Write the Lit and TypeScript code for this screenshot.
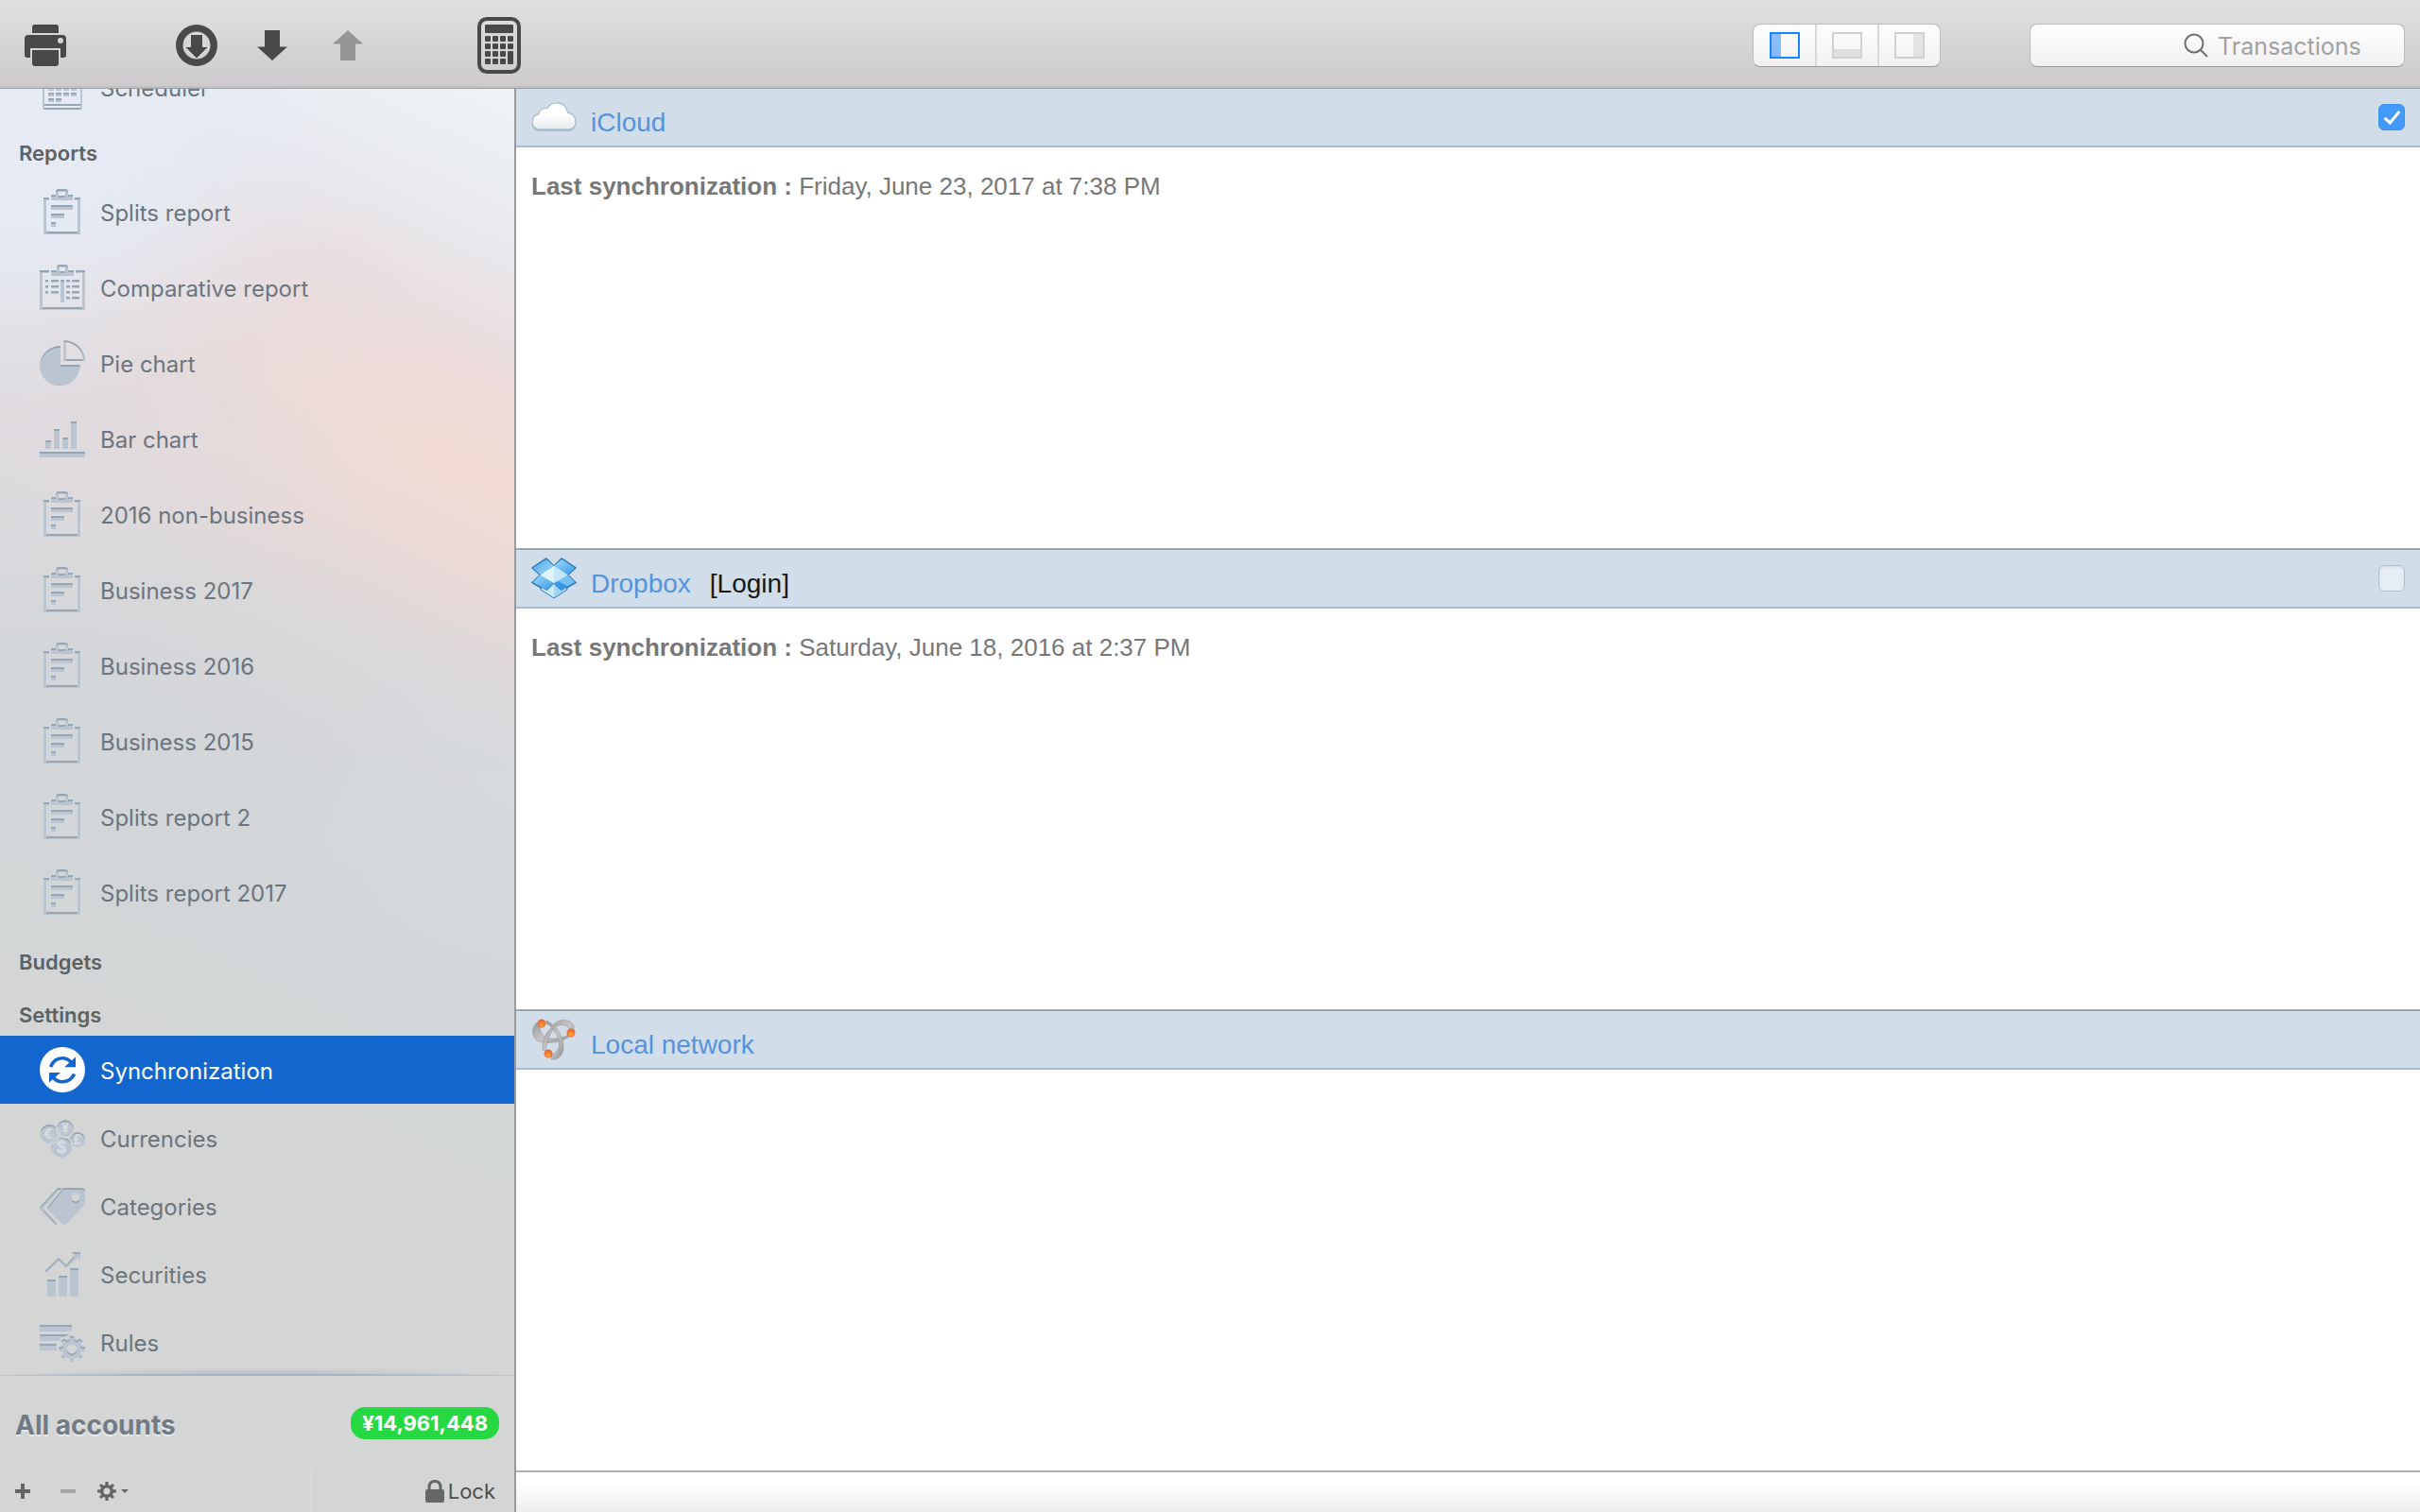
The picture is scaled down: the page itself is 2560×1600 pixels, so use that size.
import { LitElement, html, css, svg, nothing, type SVGTemplateResult } from "lit";
import { customElement, state } from "lit/decorators.js";
import { classMap } from "lit/directives/class-map.js";

type Item = { label: string; icon: string };
type Group = { title: string; size: "tall" | "regular"; items: Item[] };
type Source = { id: string; name: string; icon: string; login?: boolean; last?: string; enabled?: boolean };

const gearPath = (cx: number, cy: number, outer: number, inner: number, teeth: number): string => {
  const step = (Math.PI * 2) / teeth;
  const points: string[] = [];
  for (let i = 0; i < teeth; i++) {
    const a = i * step - Math.PI / 2;
    for (const [offset, r] of [[-0.3, inner], [-0.2, outer], [0.2, outer], [0.3, inner]]) {
      points.push(`${(cx + Math.cos(a + offset * step) * r).toFixed(2)} ${(cy + Math.sin(a + offset * step) * r).toFixed(2)}`);
    }
  }
  return `M${points.join("L")}Z`;
};

const ring = (cx: number, cy: number, r: number): string =>
  `M${cx - r} ${cy}a${r} ${r} 0 1 0 ${2 * r} 0a${r} ${r} 0 1 0 ${-2 * r} 0Z`;

const calendarCells = [18, 24, 30, 36].flatMap((y, row) =>
  [9, 17, 25, 33].slice(0, row === 3 ? 2 : 4).map((x) => svg`<rect x=${x} y=${y} width="6" height="4"></rect>`));

const glyphs: Record<string, SVGTemplateResult> = {
  calendar: svg`<g filter="url(#inset)"><path fill-rule="evenodd" d="M3 6H45V46Q45 48 43 48H5Q3 48 3 46ZM5 8V42H43V8ZM5 44V46H43V44Z"></path>${calendarCells}</g>`,
  clipboard: svg`<g filter="url(#inset)">
    <path d="M4 9H10V12H7V45H40V12H37V9H43V48H4Z"></path>
    <path fill-rule="evenodd" d="M12 6H17V3Q17 0 20 0H27Q30 0 30 3V6H35V12H12ZM20 3V7H27V3Z"></path>
    <path d="M12 17H35V22H12ZM12 26H26V31H12ZM12 35H17V40H12Z"></path></g>`,
  compare: svg`<g filter="url(#inset)">
    <path d="M0 6H10V9H3V45H45V9H38V6H48V48H0Z"></path>
    <path fill-rule="evenodd" d="M12 6H18V3Q18 0 21 0H27Q30 0 30 3V6H36V12H12ZM21 3V7H27V3Z"></path>
    <path d="M22 16H26V40H22ZM6 16H9V19H6ZM6 22H9V25H6ZM6 28H9V31H6ZM12 16H20V19H12ZM12 22H20V25H12ZM12 28H20V31H12ZM28 16H32V19H28ZM28 22H32V25H28ZM28 28H32V31H28ZM28 34H32V37H28ZM34 16H42V19H34ZM34 22H42V25H34ZM34 28H42V31H34ZM34 34H42V37H34Z"></path></g>`,
  pie: svg`<g filter="url(#inset)">
    <path d="M22 6V26H42.500A21.200 21.200 0 1 1 22 6Z"></path>
    <path fill-rule="evenodd" d="M25.500 0A22.500 22.500 0 0 1 48 22H25.500ZM27.500 2.200V20H45.700A20 20 0 0 0 27.500 2.200Z"></path></g>`,
  bars: svg`<g filter="url(#inset)"><path d="M6 26H12V35H6ZM15 14H21V35H15ZM24 23H30V35H24ZM33 6H39V35H33ZM0 38H48V44H0Z"></path></g>`,
  sync: svg`<circle cx="24" cy="24" r="24" fill="#fff"></circle>
    <path d="M11.500 21C14 15 18.500 11.800 24 11.800C28 11.800 31 13.500 33.500 16.500M36.500 28.500C34 34 29.500 36.800 24 36.800C20 36.800 17 35.300 14.500 32.500" fill="none" stroke="#1266cd" stroke-width="3.600"></path>
    <path d="M38 10.500V21.200H26ZM10 37.500V27H22Z" fill="#1266cd"></path>`,
  coins: svg`<g filter="url(#inset)">
    <circle cx="40" cy="26" r="8"></circle><circle cx="10.500" cy="20" r="10.300"></circle>
    <circle cx="27" cy="14" r="9"></circle><circle cx="23" cy="34" r="11"></circle></g>
    <g fill="none" stroke="#d4d6d5" stroke-width="1.200"><circle cx="10.500" cy="20" r="10.800"></circle><circle cx="27" cy="14" r="9.600"></circle><circle cx="23" cy="34" r="11.600"></circle></g>
    <g class="coin-signs"><text x="9" y="25">€</text><text x="27" y="19">¥</text><text x="40" y="31">£</text><text x="23" y="40" class="coin-large">$</text></g>`,
  tag: svg`<g filter="url(#inset)">
    <path fill-rule="evenodd" d="M26 5H44Q48 5 48 9V22L29 42.500Q26 45 23 42.500L9 28.500Q7.500 26.500 9 24.500L24 6Q25 5 26 5ZM${ring(38, 15, 4.5).slice(1)}"></path>
    <path d="M20 5H23.500L5 25Q4 26.500 5 28.500L18.500 43.500H16L1 29Q-.5 26.500 1 24.500L18 6Q19 5 20 5Z"></path></g>`,
  growth: svg`<g filter="url(#inset)"><path d="M8 30H17V48H8ZM20 26H29V48H20ZM32 18H41V48H32Z"></path>
    <path d="M34 1H43V10L40 7L28 18L20 10.500L7 23L6 20.500L20 7L28 14.500L37 4.500Z"></path></g>`,
  rules: svg`<g filter="url(#inset)"><path d="M0 6H34V13H0ZM0 16H31L27 18.500L23 19L20.500 23H0ZM0 26H18L17 30L18 33H0Z"></path>
    <path fill-rule="evenodd" d="${gearPath(34, 31.5, 14, 10.5, 8)}${ring(34, 31.5, 5)}"></path></g>`,
};

const sourceArt: Record<string, SVGTemplateResult> = {
  cloud: svg`<defs><linearGradient id="cloud-fill" x1="0" y1="0" x2="0" y2="1"><stop offset=".4" stop-color="#fff"></stop><stop offset="1" stop-color="#e6eaeb"></stop></linearGradient></defs>
    <path d="M8 39Q1 38 1 31Q1 24 8 22Q9 15 17 16Q21 9 29 10Q37 11 38 20Q47 22 47 31Q47 38 40 39Z" fill="#9db2c2" opacity=".7"></path>
    <path d="M8 37Q1 36 1 29Q1 22 8 20.500Q9 14 17 14.500Q21 8 29 9Q37 10 38.500 19Q47 21 47 29Q47 36 40 37Z" fill="url(#cloud-fill)" stroke="#a9bfcc" stroke-width="1.300"></path>`,
  dropbox: svg`<defs><linearGradient id="box-a" x1="0" y1="0" x2="1" y2="1"><stop offset="0" stop-color="#4ba6e8"></stop><stop offset="1" stop-color="#a8dcfa"></stop></linearGradient>
    <linearGradient id="box-b" x1="0" y1="0" x2="1" y2="1"><stop offset="0" stop-color="#a4d9f8"></stop><stop offset="1" stop-color="#3a9bea"></stop></linearGradient></defs>
    <g transform="translate(1 3)" stroke-linejoin="round">
      <path d="M9 20L23 26L37 20V33L23 42L9 33Z" fill="#b5dff8" stroke="#2d7cba"></path>
      <path d="M15 0L0 10L8.500 17.500L0 25.500L15 34L23 27L31 34L46 25.500L37.500 17.500L46 10L31 0L23 8Z" fill="#5fb4ee" stroke="#2d7cba" stroke-width="1.600"></path>
      <path d="M15 1L1 10L8.500 17L23 8Z" fill="url(#box-a)"></path><path d="M31 1L45 10L37.500 17L23 8Z" fill="url(#box-b)"></path>
      <path d="M8.500 17.500L1 25L15 33L23 26Z" fill="url(#box-b)"></path><path d="M37.500 17.500L45 25L31 33L23 26Z" fill="#3998e6"></path>
      <path d="M37.500 17.500L45 25L37 29L27 24Z" fill="#75c0f2"></path>
      <path d="M23 8L37.500 17.500L23 26L8.500 17.500Z" fill="#e3f3fd"></path><path d="M23 8L37.500 17.500L23 26Z" fill="#c4e6fa"></path>
      <path d="M23 27L30.500 34L36 31V32.500L23 41Z" fill="#9fd4f6"></path><path d="M23 27L15.500 34L10 31V32.500L23 41Z" fill="#cfeafb"></path>
    </g>`,
  network: svg`<defs><linearGradient id="steel" x1="0" y1="0" x2="1" y2="1"><stop offset="0" stop-color="#979797"></stop><stop offset=".5" stop-color="#c6c6c6"></stop><stop offset="1" stop-color="#949494"></stop></linearGradient>
    <radialGradient id="ember" cx=".5" cy=".7" r=".6"><stop offset="0" stop-color="#ffa63b"></stop><stop offset="1" stop-color="#f0622a"></stop></radialGradient></defs>
    <g transform="translate(1 3)" fill="url(#steel)" stroke="#8e8e8e" stroke-width=".5">
      <path d="M5 3C-1 8-1 17 5 22C13 26 28 25 38 19L40 15C30 21 18 22 12 17C8 13 8 9 9 7Z"></path>
      <path d="M20 9C23 2 31-1 38 1C43 3 45 7 44 12L39 10C37 5 30 4 25 8C18 14 16 22 14 33L11 32C11 22 14 14 20 9Z"></path>
      <path d="M15 1C25 6 33 16 33 29C33 38 27 43 20 42L20 37C27 35 30 29 28 22C26 14 21 7 15 4Z"></path>
    </g>
    <g fill="url(#ember)" stroke="#d56a3a" stroke-width=".5"><circle cx="11" cy="7" r="4.200"></circle><circle cx="42" cy="17" r="4.200"></circle><circle cx="18" cy="39" r="4.200"></circle></g>`,
};

const calculatorKeys = [20, 28, 36, 44].flatMap((y, row) =>
  [8, 16, 24, 32].map((x, col) =>
    col === 3 && row === 3 ? nothing : svg`<rect x=${x} y=${y} width="6" height=${col === 3 && row === 2 ? 14 : 6} rx="1"></rect>`));

@customElement("app-root")
export class AppRoot extends LitElement {
  @state() private selected = "Synchronization";

  private groups: Group[] = [
    { title: "", size: "regular", items: [{ label: "Scheduler", icon: "calendar" }] },
    {
      title: "Reports", size: "tall", items: [
        { label: "Splits report", icon: "clipboard" },
        { label: "Comparative report", icon: "compare" },
        { label: "Pie chart", icon: "pie" },
        { label: "Bar chart", icon: "bars" },
        { label: "2016 non-business", icon: "clipboard" },
        { label: "Business 2017", icon: "clipboard" },
        { label: "Business 2016", icon: "clipboard" },
        { label: "Business 2015", icon: "clipboard" },
        { label: "Splits report 2", icon: "clipboard" },
        { label: "Splits report 2017", icon: "clipboard" },
      ],
    },
    { title: "Budgets", size: "regular", items: [] },
    {
      title: "Settings", size: "regular", items: [
        { label: "Synchronization", icon: "sync" },
        { label: "Currencies", icon: "coins" },
        { label: "Categories", icon: "tag" },
        { label: "Securities", icon: "growth" },
        { label: "Rules", icon: "rules" },
      ],
    },
  ];

  private sources: Source[] = [
    { id: "icloud", name: "iCloud", icon: "cloud", last: "Friday, June 23, 2017 at 7:38 PM", enabled: true },
    { id: "dropbox", name: "Dropbox", icon: "dropbox", login: true, last: "Saturday, June 18, 2016 at 2:37 PM", enabled: false },
    { id: "local", name: "Local network", icon: "network" },
  ];

  static styles = css`
    :host {
      display: grid;
      grid-template-columns: 546px minmax(0, 1fr);
      grid-template-rows: 94px minmax(0, 1fr);
      height: 100vh;
      background: #fff;
      font-family: Inter, "Liberation Sans", sans-serif;
      font-size: 24px;
      line-height: 32px;
      color: #6c757d;
    }
    *, *::before, *::after { box-sizing: border-box; }
    svg { display: block; flex: none; }
    button { border: 0; padding: 0; margin: 0; background: none; font: inherit; color: inherit; }
    a { color: inherit; text-decoration: none; }
    h2, p, ul { margin: 0; padding: 0; }
    .defs { position: absolute; }

    .toolbar {
      grid-column: 1 / -1;
      display: flex;
      align-items: center;
      padding: 3px 16px 0 26px;
      background: linear-gradient(#e2dfe3, #cdcacd);
      border-bottom: 1px solid #a29fa2;
      box-shadow: inset 0 -2px #c3c0c3;
      color: #4a484a;
    }
    .toolbar svg { fill: currentColor; }
    .sync-tools { display: flex; align-items: center; gap: 42px; margin: 0 121px 0 116px; }
    .tool.dim { color: #979597; margin-left: 6px; }
    .segments { display: flex; margin-left: auto; }
    .segments, .search {
      height: 46px;
      border: 1px solid #bdbabd;
      border-bottom-color: #9d9a9d;
      border-radius: 8px;
      background: linear-gradient(#fff, #f1f0f1);
    }
    .segment { width: 65px; display: grid; place-items: center; color: #d0d0d0; }
    .segment + .segment { width: 66px; border-left: 2px solid #d9d8d9; }
    .segment.on { color: #1a82fb; }
    .search { display: flex; align-items: center; justify-content: flex-end; gap: 10px; width: 397px; margin-left: 94px; }
    .search svg { fill: none; }
    .search-field {
      width: 197px; height: 40px; padding: 2px 0 0; border: 0; outline: 0; background: none;
      font: inherit; font-size: 25px; color: #555;
    }
    .search-field::placeholder { color: #a2a1a2; opacity: 1; }

    .sidebar {
      display: flex;
      flex-direction: column;
      min-height: 0;
      border-right: 2px solid #999a9c;
      background:
        radial-gradient(ellipse 75% 18% at 0% 4%, rgba(229, 235, 245, 1), rgba(229, 235, 245, 0.85) 45%, rgba(229, 235, 245, 0.3) 75%, rgba(229, 235, 245, 0)),
        radial-gradient(ellipse 85% 20% at 0% 20%, rgba(222, 220, 226, 0.9), rgba(222, 219, 224, 0.7) 35%, rgba(225, 217, 220, 0)),
        radial-gradient(ellipse 60% 16% at 100% 53%, rgba(213, 218, 224, 0.6), rgba(213, 218, 224, 0)),
        linear-gradient(205deg, #eef2f5, #ecf0f3 4%, #e8e8ed 10%, #eadfe1 15%, #eedcda 19%, #f3dcd4 24%, #ecdad6 29%, #e2d8d8 34%, #d8d8da 39%, #d4d6d9 45%, #d3d6d8 60%, #d4d6d5 68%);
    }
    .list { flex: 1; min-height: 0; overflow: hidden; display: flex; flex-direction: column; justify-content: flex-end; }
    .list > * { flex: none; }
    .group-title { height: 56px; padding: 18px 20px 0; font-size: 22px; line-height: 32px; font-weight: 600; color: #5d6164; }
    .rows { list-style: none; }
    .row { display: flex; align-items: center; gap: 16px; height: 72px; padding-left: 42px; }
    .tall .row { height: 80px; }
    .row svg { fill: #bbc5d1; }
    .row-label { padding-top: 3px; }
    .row.active { background: #1266cd; color: #fff; }
    .coin-signs { fill: #d9dce0; font-size: 14px; font-weight: 700; text-anchor: middle; }
    .coin-large { font-size: 17px; }

    .summary {
      display: flex; align-items: center; justify-content: space-between;
      height: 100px; padding: 0 16px;
      position: relative;
    }
    .summary::before {
      content: ""; position: absolute; left: 0; right: 0; top: -10px; height: 10px;
      background:
        linear-gradient(90deg, rgba(158, 174, 190, 0), rgba(158, 174, 190, 0.9) 30%, rgba(158, 174, 190, 0.9) 65%, rgba(158, 174, 190, 0)) 0 100% / 100% 2px no-repeat,
        radial-gradient(ellipse 50% 100% at 50% 100%, rgba(150, 166, 176, 0.5), rgba(150, 166, 176, 0));
    }
    .summary::after {
      content: ""; position: absolute; left: 0; right: 0; top: -1px; height: 1px; background: rgba(180, 186, 190, 0.6);
    }
    .total-label { font-size: 28px; font-weight: 700; color: #717b85; text-shadow: 0 2px #e6eaea; padding-top: 4px; }
    .total { height: 34px; padding: 0 12px; border-radius: 15px; background: #26d943; color: #fff; font-size: 22px; font-weight: 700; line-height: 34px; }
    .actions { display: flex; height: 44px; color: #656565; }
    .actions-left { display: flex; align-items: center; gap: 32px; width: 330px; padding-left: 16px; border-right: 2px solid #d9dbda; }
    .gear { display: flex; align-items: center; gap: 5px; margin-left: -9px; }
    .actions svg { fill: currentColor; }
    .faint { color: #a3a5a4; }
    .lock { display: flex; align-items: center; gap: 4px; margin-left: auto; padding-right: 20px; color: #4c4e4d; font-size: 22px; }
    .lock svg { color: #656766; }

    .content { display: flex; flex-direction: column; min-width: 0; font-family: "Liberation Sans", Arial, sans-serif; }
    .source { flex: 1 1 0; min-height: 0; }
    .source + .source { border-top: 2px solid #9aa7b1; }
    .source-head {
      display: flex; align-items: center; height: 62px; padding: 0 16px;
      background: #d1dde9; border-bottom: 2px solid #a4bcd8;
      font-size: 28px;
    }
    .source-name { margin: 11px 20px 0 15px; font-size: 28px; font-weight: 400; color: #5693dd; }
    .login { margin-top: 11px; color: #161616; }
    .toggle {
      appearance: none; width: 28px; height: 28px; margin: 0 0 0 auto; display: grid; place-items: center;
      border: 1px solid #b3c0cf; border-radius: 6px; background: #e6edf5; box-shadow: inset 0 1px 3px #cfd8e2;
    }
    .toggle:checked { border-color: #3b8ff2; background: #429bfb; box-shadow: none; }
    .toggle:checked::before {
      content: ""; width: 9px; height: 17px; margin-bottom: 4px;
      border: solid #fff; border-width: 0 3px 3px 0; transform: rotate(40deg);
    }
    .detail { padding: 25px 16px; font-size: 26px; color: #777; }
    .status { height: 44px; border-top: 2px solid #b1b1b1; background: linear-gradient(#fff 20%, #efefef); }
  `;

  private pick(event: Event, label: string) {
    event.preventDefault();
    this.selected = label;
  }

  private renderGroup(group: Group) {
    return html`
      ${group.title ? html`<h2 class="group-title">${group.title}</h2>` : nothing}
      ${group.items.length
        ? html`<ul class=${classMap({ rows: true, tall: group.size === "tall" })}>
            ${group.items.map((item) => html`<li>
              <a href="#" class=${classMap({ row: true, active: item.label === this.selected })} @click=${(e: Event) => this.pick(e, item.label)}>
                <svg width="48" height="48" viewBox="0 0 48 48" aria-hidden="true">${glyphs[item.icon]}</svg>
                <span class="row-label">${item.label}</span>
              </a></li>`)}
          </ul>`
        : nothing}`;
  }

  private renderSource(source: Source) {
    return html`<section class="source">
      <header class="source-head">
        <svg width="48" height="48" viewBox="0 0 48 48" aria-hidden="true">${sourceArt[source.icon]}</svg>
        <h2 class="source-name">${source.enabled === undefined ? source.name : html`<label for=${source.id}>${source.name}</label>`}</h2>
        ${source.login ? html`<button class="login">[Login]</button>` : nothing}
        ${source.enabled === undefined ? nothing : html`<input class="toggle" type="checkbox" id=${source.id} .checked=${source.enabled}>`}
      </header>
      ${source.last ? html`<p class="detail"><b>Last synchronization :</b> ${source.last}</p>` : nothing}
    </section>`;
  }

  render() {
    return html`
      <svg class="defs" width="0" height="0" aria-hidden="true">
        <filter id="inset" x="-5%" y="-5%" width="110%" height="110%" color-interpolation-filters="sRGB">
          <feOffset in="SourceAlpha" dy="2"></feOffset>
          <feGaussianBlur stdDeviation="0.700" result="moved"></feGaussianBlur>
          <feFlood flood-color="#8595a5" flood-opacity="0.650"></feFlood>
          <feComposite in2="SourceAlpha" operator="in"></feComposite>
          <feComposite in2="moved" operator="out" result="edge"></feComposite>
          <feMerge><feMergeNode in="SourceGraphic"></feMergeNode><feMergeNode in="edge"></feMergeNode></feMerge>
        </filter>
      </svg>
      <header class="toolbar">
        <button class="tool" aria-label="Print">
          <svg width="44" height="44" viewBox="0 0 44 44"><path fill-rule="evenodd" d="M11 0H33Q36 0 36 3V9H8V3Q8 0 11 0ZM4 11H40Q44 11 44 15V32Q44 35 41 35H38V25H6V35H3Q0 35 0 32V15Q0 11 4 11ZM35 17A3 3 0 1 0 41 17A3 3 0 1 0 35 17ZM8 27H36V41Q36 44 33 44H11Q8 44 8 41Z"></path></svg>
        </button>
        <div class="sync-tools">
          <button class="tool" aria-label="Download all">
            <svg width="44" height="44" viewBox="0 0 44 44"><path fill-rule="evenodd" d="${ring(22, 22, 22)}${ring(22, 22, 14.5)}M16 11H28V24H33.500L22 35.500L10.500 24H16Z"></path></svg>
          </button>
          <button class="tool" aria-label="Download">
            <svg width="32" height="32" viewBox="0 0 32 32"><path d="M8 0H24V17.500H32L16 32L0 17.500H8Z"></path></svg>
          </button>
          <button class="tool dim" aria-label="Upload" disabled>
            <svg width="32" height="32" viewBox="0 0 32 32"><path d="M8 32H24V14.500H32L16 0L0 14.500H8Z"></path></svg>
          </button>
        </div>
        <button class="tool" aria-label="Calculator">
          <svg width="46" height="60" viewBox="0 0 46 60">
            <rect x="2" y="2" width="42" height="56" rx="8" fill="none" stroke="currentColor" stroke-width="4"></rect>
            <rect x="8" y="8" width="30" height="9" rx="1"></rect>${calculatorKeys}
          </svg>
        </button>
        <div class="segments">
          <button class="segment on" aria-label="Left panel"><svg width="32" height="28" viewBox="0 0 32 28"><path d="M2 2H12V26H2Z" opacity=".5"></path><path d="M1 1H31V27H1Z" fill="none" stroke="currentColor" stroke-width="2"></path></svg></button>
          <button class="segment" aria-label="Bottom panel"><svg width="32" height="28" viewBox="0 0 32 28"><path d="M2 18H30V26H2Z" opacity=".6"></path><path d="M1 1H31V27H1Z" fill="none" stroke="currentColor" stroke-width="2"></path></svg></button>
          <button class="segment" aria-label="Right panel"><svg width="32" height="28" viewBox="0 0 32 28"><path d="M20 2H30V26H20Z" opacity=".5"></path><path d="M1 1H31V27H1Z" fill="none" stroke="currentColor" stroke-width="2"></path></svg></button>
        </div>
        <label class="search">
          <svg width="26" height="26" viewBox="0 0 26 26" stroke="#6f6e6f" stroke-width="2" aria-hidden="true"><circle cx="11" cy="11" r="9.500"></circle><path d="M18 18L25 25"></path></svg>
          <input class="search-field" type="search" placeholder="Transactions" aria-label="Search transactions">
        </label>
      </header>
      <aside class="sidebar">
        <nav class="list">${this.groups.map((g) => this.renderGroup(g))}</nav>
        <div class="summary">
          <span class="total-label">All accounts</span>
          <span class="total">¥14,961,448</span>
        </div>
        <div class="actions">
          <div class="actions-left">
            <button aria-label="Add"><svg width="16" height="16" viewBox="0 0 16 16"><path d="M6 0H10V6H16V10H10V16H6V10H0V6H6Z"></path></svg></button>
            <button class="faint" aria-label="Remove"><svg width="16" height="4" viewBox="0 0 16 4"><path d="M0 0H16V4H0Z"></path></svg></button>
            <button class="gear" aria-label="Options">
              <svg width="20" height="20" viewBox="0 0 20 20"><path fill-rule="evenodd" d="${gearPath(10, 10, 10, 7, 8)}${ring(10, 10, 3.5)}"></path></svg>
              <svg width="8" height="4" viewBox="0 0 8 4"><path d="M0 0H8L4 4Z"></path></svg>
            </button>
          </div>
          <button class="lock">
            <svg width="20" height="24" viewBox="0 0 20 24" aria-hidden="true"><path fill-rule="evenodd" d="M2.500 10V8Q2.500 0 10 0Q17.500 0 17.500 8V10H18Q20 10 20 12V22Q20 24 18 24H2Q0 24 0 22V12Q0 10 2 10ZM5.500 10H14.500V8Q14.500 3 10 3Q5.500 3 5.500 8Z"></path></svg>
            <span>Lock</span>
          </button>
        </div>
      </aside>
      <main class="content">
        ${this.sources.map((s) => this.renderSource(s))}
        <footer class="status"></footer>
      </main>`;
  }
}
